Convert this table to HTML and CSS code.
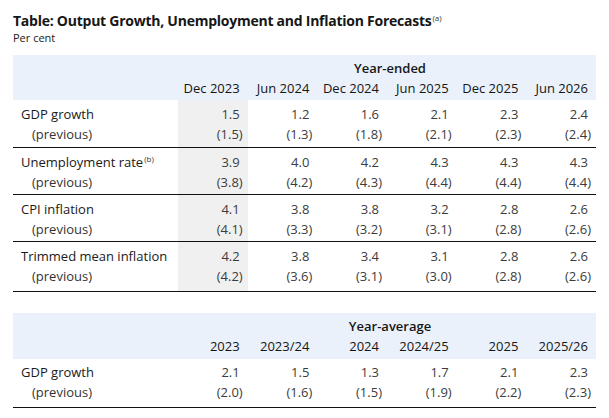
FILE: index.html
```html
<!DOCTYPE html>
<html lang="en">
<head>
<meta charset="utf-8">
<title>Output Growth, Unemployment and Inflation Forecasts</title>
<link rel="stylesheet" href="styles.css">
</head>
<body>
<h1 class="title">Table: Output Growth, Unemployment and Inflation Forecasts<sup class="note">(a)</sup></h1>
<p class="unit">Per cent</p>

<div class="tbl">
  <div class="band">
    <div class="row"><div class="grp">Year-ended</div></div>
    <div class="row">
      <div></div>
      <div class="hdr">Dec 2023</div>
      <div class="hdr">Jun 2024</div>
      <div class="hdr">Dec 2024</div>
      <div class="hdr">Jun 2025</div>
      <div class="hdr">Dec 2025</div>
      <div class="hdr">Jun 2026</div>
    </div>
  </div>
  <div class="row block block-first">
    <div class="cell label"><span class="v">GDP growth</span><span class="p">(previous)</span></div>
    <div class="cell shade"><span class="v">1.5</span><span class="p">(1.5)</span></div>
    <div class="cell"><span class="v">1.2</span><span class="p">(1.3)</span></div>
    <div class="cell"><span class="v">1.6</span><span class="p">(1.8)</span></div>
    <div class="cell"><span class="v">2.1</span><span class="p">(2.1)</span></div>
    <div class="cell"><span class="v">2.3</span><span class="p">(2.3)</span></div>
    <div class="cell"><span class="v">2.4</span><span class="p">(2.4)</span></div>
  </div>
  <div class="row block">
    <div class="cell label"><span class="v">Unemployment rate<sup class="note">(b)</sup></span><span class="p">(previous)</span></div>
    <div class="cell shade"><span class="v">3.9</span><span class="p">(3.8)</span></div>
    <div class="cell"><span class="v">4.0</span><span class="p">(4.2)</span></div>
    <div class="cell"><span class="v">4.2</span><span class="p">(4.3)</span></div>
    <div class="cell"><span class="v">4.3</span><span class="p">(4.4)</span></div>
    <div class="cell"><span class="v">4.3</span><span class="p">(4.4)</span></div>
    <div class="cell"><span class="v">4.3</span><span class="p">(4.4)</span></div>
  </div>
  <div class="row block">
    <div class="cell label"><span class="v">CPI inflation</span><span class="p">(previous)</span></div>
    <div class="cell shade"><span class="v">4.1</span><span class="p">(4.1)</span></div>
    <div class="cell"><span class="v">3.8</span><span class="p">(3.3)</span></div>
    <div class="cell"><span class="v">3.8</span><span class="p">(3.2)</span></div>
    <div class="cell"><span class="v">3.2</span><span class="p">(3.1)</span></div>
    <div class="cell"><span class="v">2.8</span><span class="p">(2.8)</span></div>
    <div class="cell"><span class="v">2.6</span><span class="p">(2.6)</span></div>
  </div>
  <div class="row block block-last">
    <div class="cell label"><span class="v">Trimmed mean inflation</span><span class="p">(previous)</span></div>
    <div class="cell shade"><span class="v">4.2</span><span class="p">(4.2)</span></div>
    <div class="cell"><span class="v">3.8</span><span class="p">(3.6)</span></div>
    <div class="cell"><span class="v">3.4</span><span class="p">(3.1)</span></div>
    <div class="cell"><span class="v">3.1</span><span class="p">(3.0)</span></div>
    <div class="cell"><span class="v">2.8</span><span class="p">(2.8)</span></div>
    <div class="cell"><span class="v">2.6</span><span class="p">(2.6)</span></div>
  </div>
</div>

<div class="tbl tbl-second">
  <div class="band band-second">
    <div class="row"><div class="grp">Year-average</div></div>
    <div class="row">
      <div></div>
      <div class="hdr">2023</div>
      <div class="hdr">2023/24</div>
      <div class="hdr">2024</div>
      <div class="hdr">2024/25</div>
      <div class="hdr">2025</div>
      <div class="hdr">2025/26</div>
    </div>
  </div>
  <div class="row block block-single">
    <div class="cell label"><span class="v">GDP growth</span><span class="p">(previous)</span></div>
    <div class="cell"><span class="v">2.1</span><span class="p">(2.0)</span></div>
    <div class="cell"><span class="v">1.5</span><span class="p">(1.6)</span></div>
    <div class="cell"><span class="v">1.3</span><span class="p">(1.5)</span></div>
    <div class="cell"><span class="v">1.7</span><span class="p">(1.9)</span></div>
    <div class="cell"><span class="v">2.1</span><span class="p">(2.2)</span></div>
    <div class="cell"><span class="v">2.3</span><span class="p">(2.3)</span></div>
  </div>
</div>
</body>
</html>
```

FILE: styles.css
```css
html, body {
  background: #ffffff;
}

body {
  margin: 0;
  padding: 12px 13px 0;
  font-family: "Open Sans", "Noto Sans", sans-serif;
  font-size: 13px;
  color: #1a1a1a;
}

.title {
  margin: 0;
  font-size: 14px;
  font-weight: 700;
  line-height: 18px;
  letter-spacing: -0.25px;
  color: #161616;
}

.note {
  font-size: 8px;
  font-weight: 400;
  line-height: 0;
  letter-spacing: 0;
  vertical-align: 5px;
  margin-left: 1px;
  color: #333333;
}

.unit {
  margin: 1px 0 0;
  font-size: 11px;
  line-height: 14px;
}

.tbl {
  width: 583px;
  margin-top: 10px;
}

.tbl-second {
  margin-top: 21px;
}

.band {
  background: #eaf1fa;
  padding: 3px 0 2px;
}

.band-second {
  padding-bottom: 3px;
}

.row {
  display: grid;
  grid-template-columns: 165px repeat(6, 1fr);
}

.grp {
  grid-column: 2 / -1;
  text-align: center;
  font-weight: 600;
  line-height: 20px;
  padding-left: 6px;
  color: #161616;
}

.hdr {
  text-align: right;
  padding-right: 8px;
  line-height: 20px;
  color: #161616;
}

.block {
  border-bottom: 1px solid #111111;
}

.cell {
  padding-top: 4px;
  padding-right: 8px;
  padding-bottom: 2px;
  text-align: right;
  color: #3c3c3c;
}

.block-first .cell {
  padding-bottom: 3px;
}

.block-last .cell {
  padding-bottom: 5px;
}

.block-single .cell {
  padding-top: 3px;
  padding-bottom: 5px;
}

.cell .v,
.cell .p {
  display: block;
  line-height: 20px;
  white-space: nowrap;
}

.cell .p {
  margin-right: -3px;
}

.label {
  text-align: left;
  padding-left: 8px;
  color: #1a1a1a;
}

.label .p {
  margin-right: 0;
  padding-left: 11px;
  color: #333333;
}

.shade {
  background: #f0f0f0;
}
```
